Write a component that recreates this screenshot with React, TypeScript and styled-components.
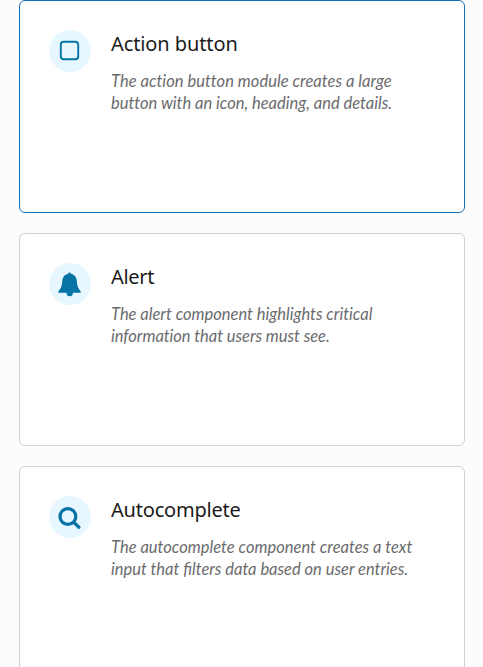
import React, { type ReactNode } from 'react';
import styled, { createGlobalStyle } from 'styled-components';

const GlobalStyle = createGlobalStyle`
  * { box-sizing: border-box; }
  html { height: 100%; overflow: hidden; }
  body { margin: 0; height: 100%; overflow: hidden; background: #fcfcfc; }
`;

const CardList = styled.main`
  display: flex;
  flex-direction: column;
  gap: 20px;
  padding: 0 18px 0 19px;
`;

const Card = styled.article<{ $active?: boolean }>`
  display: flex;
  gap: 20px;
  height: 213px;
  padding: 29px;
  border: 1px solid ${(p) => (p.$active ? '#176fb8' : '#d0d0d0')};
  border-radius: 6px;
  background: #fff;
`;

const IconCircle = styled.div`
  display: flex;
  flex: none;
  align-items: center;
  justify-content: center;
  width: 42px;
  height: 42px;
  border-radius: 50%;
  background: #e6f7ff;
  color: #0874a6;
`;

const Content = styled.div`
  display: flex;
  flex-direction: column;
  gap: 12px;
`;

const Title = styled.h2<{ $tracking: number }>`
  margin: 0;
  font: 400 20px/28px 'Noto Sans', sans-serif;
  letter-spacing: ${(p) => p.$tracking}px;
  color: #1b1b1b;
`;

const Description = styled.p`
  margin: 0;
  font: italic 400 16.5px/22px Lato, sans-serif;
  color: #6b6b6e;
  white-space: nowrap;
`;

const Line = styled.span<{ $tracking: number }>`
  display: block;
  width: max-content;
  letter-spacing: ${(p) => p.$tracking}px;
`;

const Ligature = styled.span`
  letter-spacing: 0;
`;

const SquareIcon = () => (
  <svg width="42" height="42" viewBox="0 0 42 42" fill="none">
    <rect x="11.8" y="11.8" width="17.4" height="17.4" rx="3" stroke="currentColor" strokeWidth="1.9" />
  </svg>
);

const BellIcon = () => (
  <svg width="42" height="42" viewBox="0 0 42 42" fill="currentColor">
    <path d="M19.4 10.7a1.2 1.2 0 0 1 2.4 0c3.8.7 5.8 3.5 6 7.2.3 5 1.4 7.6 3.9 10.3v1.6h-7.8a3.2 3.5 0 0 1-6.4 0H9.4v-1.6c2.5-2.7 3.6-5.3 3.9-10.3.3-3.7 2.3-6.5 6.1-7.2z" />
  </svg>
);

const SearchIcon = () => (
  <svg width="42" height="42" viewBox="0 0 42 42" fill="none" stroke="currentColor" strokeWidth="3.3" strokeLinecap="round">
    <circle cx="18.9" cy="20.5" r="7.9" />
    <path d="M25 26.5l4.9 4.7" />
  </svg>
);

interface CardData {
  title: string;
  tracking: number;
  Icon: () => React.JSX.Element;
  active?: boolean;
  lines: { text: ReactNode; tracking: number }[];
}

const cards: CardData[] = [
  {
    title: 'Action button', tracking: -0.1, Icon: SquareIcon, active: true,
    lines: [
      { text: 'The action button module creates a large', tracking: 0.03 },
      { text: 'button with an icon, heading, and details.', tracking: -0.01 },
    ],
  },
  {
    title: 'Alert', tracking: -0.3, Icon: BellIcon,
    lines: [
      { text: 'The alert component highlights critical', tracking: -0.01 },
      { text: 'information that users must see.', tracking: -0.04 },
    ],
  },
  {
    title: 'Autocomplete', tracking: -0.2, Icon: SearchIcon,
    lines: [
      { text: 'The autocomplete component creates a text', tracking: 0.01 },
      { text: <>input that <Ligature>fi</Ligature>lters data based on user entries.</>, tracking: -0.01 },
    ],
  },
];

export default function App() {
  return (
    <>
      <GlobalStyle />
      <CardList>
        {cards.map(({ title, tracking, Icon, active, lines }) => (
          <Card key={title} $active={active}>
            <IconCircle><Icon /></IconCircle>
            <Content>
              <Title $tracking={tracking}>{title}</Title>
              <Description>
                {lines.map((line, i) => <Line key={i} $tracking={line.tracking}>{line.text}</Line>)}
              </Description>
            </Content>
          </Card>
        ))}
      </CardList>
    </>
  );
}
